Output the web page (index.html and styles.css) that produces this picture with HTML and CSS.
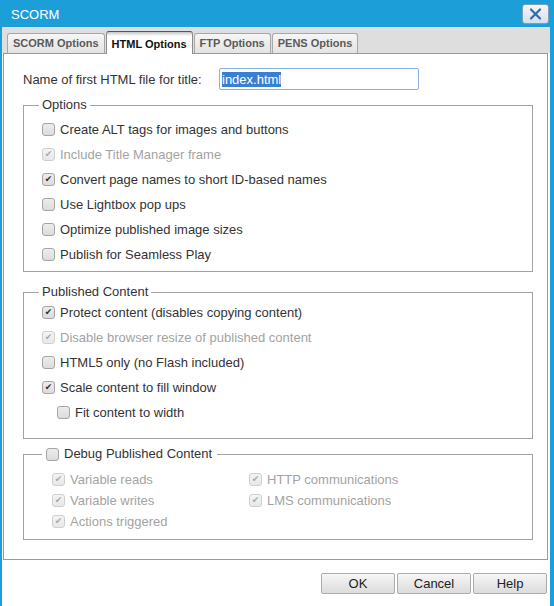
FILE: index.html
```html
<!DOCTYPE html>
<html lang="en">
<head>
    <meta charset="UTF-8">
    <title>SCORM</title>
    <link rel="stylesheet" href="styles.css">
</head>
<body>
    <div class="window">
        <div class="titlebar">
            <span class="title">SCORM</span>
            <button class="close" title="Close">
                <svg width="13" height="12" viewBox="0 0 13 12">
                    <path d="M2 1.5 L11 10.5 M11 1.5 L2 10.5" stroke="#2c6cb4" stroke-width="2.2" stroke-linecap="round"/>
                </svg>
            </button>
        </div>
        <div class="dialog">
            <div class="tabs">
                <div class="tab">SCORM Options</div>
                <div class="tab active">HTML Options</div>
                <div class="tab">FTP Options</div>
                <div class="tab">PENS Options</div>
            </div>
            <div class="panel">
                <div class="name-row">
                    <label class="name-label">Name of first HTML file for title:</label>
                    <div class="textbox"><span class="selected">index.html</span></div>
                </div>

                <fieldset class="group options">
                    <legend>Options</legend>
                    <label class="check"><input type="checkbox">Create ALT tags for images and buttons</label>
                    <label class="check disabled"><input type="checkbox" checked disabled>Include Title Manager frame</label>
                    <label class="check"><input type="checkbox" checked>Convert page names to short ID-based names</label>
                    <label class="check"><input type="checkbox">Use Lightbox pop ups</label>
                    <label class="check"><input type="checkbox">Optimize published image sizes</label>
                    <label class="check"><input type="checkbox">Publish for Seamless Play</label>
                </fieldset>

                <fieldset class="group published">
                    <legend>Published Content</legend>
                    <label class="check"><input type="checkbox" checked>Protect content (disables copying content)</label>
                    <label class="check disabled"><input type="checkbox" checked disabled>Disable browser resize of published content</label>
                    <label class="check"><input type="checkbox">HTML5 only (no Flash included)</label>
                    <label class="check"><input type="checkbox" checked>Scale content to fill window</label>
                    <label class="check nested"><input type="checkbox">Fit content to width</label>
                </fieldset>

                <fieldset class="group debug">
                    <legend><label class="check"><input type="checkbox">Debug Published Content</label></legend>
                    <div class="debug-grid">
                        <label class="check disabled"><input type="checkbox" checked disabled>Variable reads</label>
                        <label class="check disabled"><input type="checkbox" checked disabled>HTTP communications</label>
                        <label class="check disabled"><input type="checkbox" checked disabled>Variable writes</label>
                        <label class="check disabled"><input type="checkbox" checked disabled>LMS communications</label>
                        <label class="check disabled"><input type="checkbox" checked disabled>Actions triggered</label>
                    </div>
                </fieldset>
            </div>
            <div class="footer">
                <button class="btn">OK</button>
                <button class="btn">Cancel</button>
                <button class="btn">Help</button>
            </div>
        </div>
    </div>
</body>
</html>
```

FILE: styles.css
```css
body {
    margin: 0;
    font-family: "Liberation Sans", Arial, sans-serif;
    font-size: 13px;
    color: #333;
    background-color: #1c9fd9;
}
.window {
    width: 554px;
    height: 606px;
    display: flex;
    flex-direction: column;
    background-color: #1c9fd9;
}
.titlebar {
    height: 27px;
    display: flex;
    justify-content: space-between;
    align-items: flex-start;
    padding: 0 5px 0 11px;
    flex-shrink: 0;
}
.title {
    color: white;
    line-height: 16px;
    margin-top: 7px;
}
.close {
    width: 27px;
    height: 20px;
    margin-top: 4px;
    padding: 0;
    display: flex;
    align-items: center;
    justify-content: center;
    border: 1px solid #7f9db9;
    border-radius: 3px;
    background: linear-gradient(#f3f6f9, #d6e0ea);
}
.dialog {
    flex: 1;
    margin: 0 4px 0 2px;
    background-color: white;
    display: flex;
    flex-direction: column;
}
.tabs {
    height: 26px;
    background-color: #dedede;
    display: flex;
    align-items: flex-end;
    gap: 1px;
    padding-left: 5px;
    flex-shrink: 0;
}
.tab {
    height: 19px;
    line-height: 19px;
    padding: 0 5px;
    font-size: 11px;
    font-weight: bold;
    color: #5a5a5a;
    border: 1px solid #a7a7a7;
    border-bottom: none;
    border-radius: 3px 3px 0 0;
    background: linear-gradient(#f6f6f6, #e3e3e3);
}
.tab.active {
    height: 22px;
    line-height: 24px;
    color: #111;
    border-color: #8c8c8c;
    border-top-color: #555;
    background: linear-gradient(#c4c4c4 0, #fff 4px);
    margin-bottom: -1px;
    position: relative;
}
.panel {
    box-sizing: border-box;
    height: 507px;
    margin: 0 2px 0 1px;
    border: 1px solid #9a9a9a;
    padding: 14px 14px 0 19px;
    flex-shrink: 0;
}
.name-row {
    display: flex;
    align-items: center;
    height: 22px;
}
.name-label {
    width: 196px;
    flex-shrink: 0;
}
.textbox {
    width: 194px;
    height: 20px;
    border: 1px solid #86b2e3;
    border-radius: 2px;
    padding: 0 2px;
    display: flex;
    align-items: center;
}
.selected {
    background-color: #3b7fd4;
    color: white;
    line-height: 15px;
}
.group {
    margin: 0;
    border: 1px solid #a2a2a2;
    padding: 0 0 0 18px;
    min-width: 0;
}
.group legend {
    line-height: 16px;
    padding: 0 3px;
    margin-left: -3px;
}
.options {
    margin-top: 7px;
    padding-top: 4px;
    padding-bottom: 4px;
}
.published {
    margin-top: 12px;
    padding-bottom: 13px;
}
.debug {
    margin-top: 7px;
    padding-top: 7px;
    padding-bottom: 7px;
}
.debug legend {
    margin-left: 0;
    padding: 0 5px 0 4px;
}
.debug legend .check {
    height: 16px;
}
.check {
    display: flex;
    align-items: center;
    height: 25px;
}
.check.nested {
    padding-left: 15px;
}
.check.disabled {
    color: #a3a3a3;
}
.debug-grid {
    display: grid;
    grid-template-columns: 197px 1fr;
    padding-left: 10px;
}
.debug-grid .check {
    height: 21px;
}
.check input {
    appearance: none;
    -webkit-appearance: none;
    width: 13px;
    height: 13px;
    margin: 0 5px 0 0;
    border: 1px solid #a5a5a5;
    border-radius: 3px;
    background: linear-gradient(#ececec, #dcdcdc);
    display: grid;
    place-content: center;
    flex-shrink: 0;
}
.check input:checked::before {
    content: "\2714";
    font-family: "DejaVu Sans", sans-serif;
    font-size: 9px;
    line-height: 9px;
    color: #2b2b2b;
}
.check input:disabled {
    border-color: #cfcfcf;
    background: linear-gradient(#f4f4f4, #e8e8e8);
}
.check input:disabled:checked::before {
    color: #a8a8a8;
}
.footer {
    flex: 1;
    display: flex;
    justify-content: flex-end;
    align-items: flex-start;
    gap: 2px;
    padding: 13px 3px 0 0;
}
.btn {
    width: 74px;
    height: 21px;
    padding: 0;
    font-family: "Liberation Sans", Arial, sans-serif;
    font-size: 13px;
    color: #222;
    border: 1px solid #ababab;
    border-radius: 2px;
    background: linear-gradient(#f6f6f6, #dcdcdc);
}
```
